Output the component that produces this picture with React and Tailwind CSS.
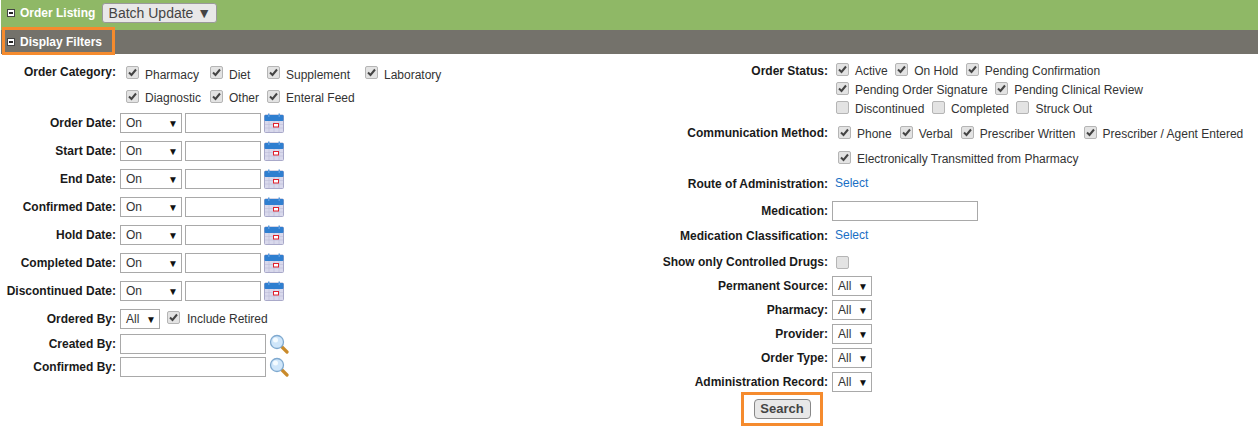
import React from 'react';

const Minus = () => (
  <span className="flex h-[8px] w-[8px] shrink-0 items-center justify-center border border-[#444] bg-white">
    <span className="h-[2px] w-[4px] bg-[#222]" />
  </span>
);

const Checkbox = ({ checked }) => (
  <span className="flex h-[13px] w-[13px] shrink-0 items-center justify-center rounded-[2px] border border-[#b5b5b5] bg-[#e3e3e3]">
    {checked && (
      <svg width="9" height="9" viewBox="0 0 9 9">
        <path d="M1 4.5 L3.5 7 L8 1.5" fill="none" stroke="#444" strokeWidth="2" />
      </svg>
    )}
  </span>
);

const Check = ({ label, checked = true, offset = '', lift = '' }) => (
  <span className="flex items-center gap-[6px]">
    <span className={lift}><Checkbox checked={checked} /></span>
    <span className={offset}>{label}</span>
  </span>
);

const Select = ({ value, wide }) => (
  <span className={`flex h-[20px] shrink-0 items-center justify-between border border-[#a9a9a9] bg-white pl-[5px] pr-[3px] ${wide ? 'w-[62px]' : 'w-[40px]'}`}>
    <span>{value}</span>
    <span className="text-[10px] text-[#111]">▼</span>
  </span>
);

const TextInput = ({ className }) => (
  <input type="text" className={`h-[20px] border border-[#a9a9a9] bg-white ${className}`} />
);

const CalendarIcon = () => (
  <svg width="20" height="20" viewBox="0 0 20 20" className="shrink-0">
    <rect x="0.5" y="2" width="19" height="17.5" rx="1" fill="#d9d9ec" stroke="#a9a9c9" />
    <rect x="0.5" y="2" width="19" height="6" rx="1" fill="#2f7fd0" />
    <rect x="4" y="0.5" width="1.5" height="3.5" fill="#5a9be0" />
    <rect x="14.5" y="0.5" width="1.5" height="3.5" fill="#5a9be0" />
    <path d="M1 11.5H19M1 15H19M5 8V19M10 8V19M15 8V19" stroke="#bdbdd8" strokeWidth="0.6" />
    <rect x="9.5" y="10.5" width="5" height="3.5" fill="#fff" stroke="#e0202c" />
  </svg>
);

const SearchIcon = () => (
  <svg width="20" height="20" viewBox="0 0 20 20" className="shrink-0">
    <path d="M12.5 12.5 L18 18" stroke="#c98a2a" strokeWidth="3.2" strokeLinecap="round" />
    <circle cx="8" cy="8" r="6.5" fill="#cfe6fa" stroke="#7fa9cf" strokeWidth="1.3" />
    <circle cx="6.5" cy="6" r="2.5" fill="#f4fbff" />
  </svg>
);

const LeftRow = ({ label, height, children }) => (
  <div className={`flex ${height} items-center`}>
    <label className="w-[115px] shrink-0 whitespace-nowrap text-right font-bold text-[#1a1a1a]">{label}</label>
    <div className="flex items-center pl-[4px]">{children}</div>
  </div>
);

const RightRow = ({ label, height, children }) => (
  <div className={`flex ${height} items-center`}>
    <label className="w-[168px] shrink-0 whitespace-nowrap text-right font-bold text-[#1a1a1a]">{label}</label>
    <div className="flex items-center pl-[4px]">{children}</div>
  </div>
);

const dateRows = ['Order Date:', 'Start Date:', 'End Date:', 'Confirmed Date:', 'Hold Date:', 'Completed Date:', 'Discontinued Date:'];
const selectRows = ['Permanent Source:', 'Pharmacy:', 'Provider:', 'Order Type:'];

export default function App() {
  return (
    <div className="h-[426px] w-[1258px] overflow-hidden bg-white pl-px font-['Liberation_Sans',Arial,sans-serif] text-[12px] text-[#333]">
      {/* Order listing bar */}
      <div className="flex h-[30px] items-center bg-[#8fb866] pb-[4px] pl-[6px]">
        <Minus />
        <span className="ml-[5px] font-bold text-white">Order Listing</span>
        <button className="ml-[7px] flex h-[20px] w-[115px] items-center justify-center rounded-[3px] border border-[#999] bg-[#e8e8e8] text-[14px] font-medium text-[#444]">
          Batch Update ▼
        </button>
      </div>

      {/* Display filters bar */}
      <div className="relative flex h-[24px] items-center gap-[5px] bg-[#74726b] pl-[6px]">
        <Minus />
        <span className="font-bold text-white">Display Filters</span>
        <div className="absolute -top-[3px] left-px h-[28px] w-[113px] border-3 border-[#f58b2e]" />
      </div>

      <div className="flex">
        {/* Left filters */}
        <div className="w-[659px] shrink-0 pt-[8px]">
          <div className="flex items-start">
            <label className="w-[115px] shrink-0 pt-[1px] text-right font-bold text-[#1a1a1a]">Order Category:</label>
            <div className="grid grid-cols-[84px_57px_98px_auto] pl-[10px]">
              <div className="flex h-[23px] items-center"><Check label="Pharmacy" offset="pt-[2px]" lift="mb-[2px]" /></div>
              <div className="flex h-[23px] items-center"><Check label="Diet" offset="pt-[2px]" lift="mb-[2px]" /></div>
              <div className="flex h-[23px] items-center"><Check label="Supplement" offset="pt-[2px]" lift="mb-[2px]" /></div>
              <div className="flex h-[23px] items-center"><Check label="Laboratory" offset="pt-[2px]" lift="mb-[2px]" /></div>
              <div className="flex h-[24px] items-center"><Check label="Diagnostic" offset="pt-[2px]" lift="mb-[2px]" /></div>
              <div className="flex h-[24px] items-center"><Check label="Other" offset="pt-[2px]" lift="mb-[2px]" /></div>
              <div className="flex h-[24px] items-center"><Check label="Enteral Feed" offset="pt-[2px]" lift="mb-[2px]" /></div>
            </div>
          </div>

          {dateRows.map((label) => (
            <LeftRow key={label} label={label} height="h-[28px]">
              <Select value="On" wide />
              <TextInput className="ml-[3px] w-[76px]" />
              <span className="ml-[3px]"><CalendarIcon /></span>
            </LeftRow>
          ))}

          <LeftRow label="Ordered By:" height="h-[28px]">
            <Select value="All" />
            <span className="ml-[7px]"><Check label="Include Retired" offset="ml-px" lift="mb-[4px]" /></span>
          </LeftRow>
          <LeftRow label="Created By:" height="h-[22px]">
            <TextInput className="w-[146px]" />
            <span className="ml-[3px]"><SearchIcon /></span>
          </LeftRow>
          <LeftRow label="Confirmed By:" height="h-[24px]">
            <TextInput className="w-[146px]" />
            <span className="ml-[3px]"><SearchIcon /></span>
          </LeftRow>
        </div>

        {/* Right filters */}
        <div className="flex-1 pt-[7px]">
          <RightRow label="Order Status:" height="h-[19px]">
            <div className="flex gap-[7.5px] pl-[4px]">
              <Check label="Active" lift="mb-[2px]" />
              <Check label="On Hold" lift="mb-[2px]" />
              <Check label="Pending Confirmation" lift="mb-[2px]" />
            </div>
          </RightRow>
          <RightRow label="" height="h-[19px]">
            <div className="flex gap-[7.5px] pl-[4px]">
              <Check label="Pending Order Signature" lift="mb-[2px]" />
              <Check label="Pending Clinical Review" lift="mb-[2px]" />
            </div>
          </RightRow>
          <RightRow label="" height="h-[19px]">
            <div className="flex gap-[7.5px] pl-[4px]">
              <Check label="Discontinued" checked={false} lift="mb-[2px]" />
              <Check label="Completed" checked={false} lift="mb-[2px]" />
              <Check label="Struck Out" checked={false} lift="mb-[2px]" />
            </div>
          </RightRow>
          <RightRow label="Communication Method:" height="h-[28px] pt-[1px]">
            <div className="flex gap-[8px] pl-[6px]">
              <Check label="Phone" offset="pt-[2px]" />
              <Check label="Verbal" offset="pt-[2px]" />
              <Check label="Prescriber Written" offset="pt-[2px]" />
              <Check label="Prescriber / Agent Entered" offset="pt-[2px]" />
            </div>
          </RightRow>
          <RightRow label="" height="h-[25px] pb-[2px]">
            <div className="pl-[6px]"><Check label="Electronically Transmitted from Pharmacy" offset="pt-[2px]" /></div>
          </RightRow>
          <RightRow label="Route of Administration:" height="h-[26px]">
            <a className="pb-[2px] pl-[3px] text-[#1a6fc4]">Select</a>
          </RightRow>
          <RightRow label="Medication:" height="h-[27px]">
            <TextInput className="w-[146px]" />
          </RightRow>
          <RightRow label="Medication Classification:" height="h-[24px]">
            <a className="pb-[2px] pl-[3px] text-[#1a6fc4]">Select</a>
          </RightRow>
          <RightRow label="Show only Controlled Drugs:" height="h-[26px] pt-[2px]">
            <span className="pl-[4px]"><Checkbox /></span>
          </RightRow>
          {selectRows.map((label) => (
            <RightRow key={label} label={label} height="h-[24px]">
              <Select value="All" />
            </RightRow>
          ))}
          <RightRow label="Administration Record:" height="h-[22px] pt-[2px]">
            <Select value="All" />
          </RightRow>
          <div className="flex w-[244px] justify-center">
            <div className="flex h-[34px] w-[82px] items-center justify-center border-3 border-[#f58b2e]">
              <button className="flex h-[20px] w-[57px] items-center justify-center rounded-[4px] border border-[#888] bg-[#e8e8e8] text-[13px] font-bold text-[#444]">
                Search
              </button>
            </div>
          </div>
        </div>
      </div>
    </div>
  );
}
